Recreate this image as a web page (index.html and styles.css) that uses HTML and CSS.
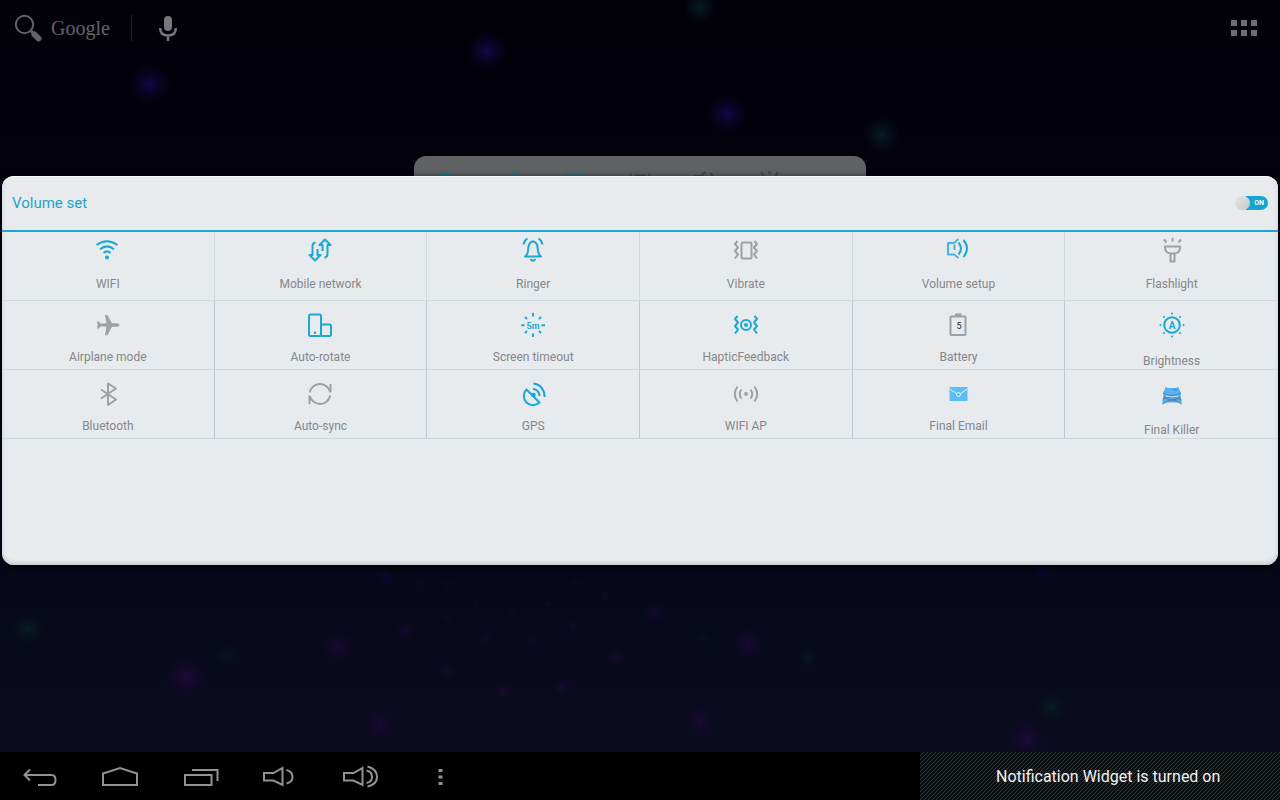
FILE: index.html
```html
<!DOCTYPE html>
<html lang="en">
<head>
<meta charset="utf-8">
<title>Notification Widget</title>
<link rel="stylesheet" href="styles.css">
</head>
<body>
<svg class="sprite" aria-hidden="true">
  <symbol id="wifi" viewBox="0 0 26 26"><path d="M1.5 8Q12 .5 22.5 8M5 12.2Q12 6.5 19 12.2M8.500 16Q12 12.700 15.500 16"/><circle class="solid" cx="12" cy="20.500" r="2"/></symbol>
  <symbol id="data" viewBox="0 0 26 26"><path d="M8.500 5.500Q5.500 6 5.500 9V18H2.500L8 23.500L13.500 18H10.500V12M17.500 20.500Q20.500 20 20.500 17V8H23.500L18 2.500L12.500 8H15.500V14"/></symbol>
  <symbol id="ringer" viewBox="0 0 26 26"><path d="M5 19.500Q8.200 17 8.200 12Q8.500 5 13 4.200Q17.500 5 17.800 12Q17.800 17 21 19.500ZM10.500 22Q13 25.500 15.500 22M3.500 7.500Q4 3.500 7.500 1.500M22.500 7.500Q22 3.500 18.500 1.500"/></symbol>
  <symbol id="zigzag" viewBox="0 0 26 26"><path d="M4.500 4L2 7L5 10.500L2 14L5 17.500L2 21.500M21.500 4L24 7L21 10.500L24 14L21 17.500L24 21.500"/></symbol>
  <symbol id="vibrate" viewBox="0 0 26 26"><use href="#zigzag"/><rect x="8.500" y="5.500" width="10" height="16" rx="1"/></symbol>
  <symbol id="volume" viewBox="0 0 26 26"><path class="light" d="M13.500 2L9 6H3V17.500H9L13.500 21M9.500 7.500V13"/><path d="M13.500 5.500Q18.500 11.700 13.500 17.500M18.500 3Q25.500 11.700 18.500 20"/></symbol>
  <symbol id="flashlight" viewBox="0 0 26 26"><path d="M6 9.500H21V11Q20.500 16 15.500 16.500H11.500Q6.500 16 6 11ZM11.500 16.500V24.500H15.500V16.500M13.500 1V4.500M5 2.500L7.500 5.500M22 2.500L19.500 5.500"/></symbol>
  <symbol id="plane" viewBox="0 0 26 26"><path class="solid" d="M24.700 13Q24.500 11.200 21 11.200H17L12.500 3H10L11.500 11.200L6 11.800L3.800 9.500H2L2.800 13L2 16.500H3.800L6 14.200L11.500 14.800L10 23.200H12.500L17 14.800H21Q24.500 14.800 24.700 13Z"/></symbol>
  <symbol id="rotate" viewBox="0 0 26 26"><rect x="2" y="2.500" width="12" height="21.500" rx="1.500"/><path d="M14 12.500H22.500Q24 12.500 24 14V22.500Q24 24 22.500 24H14"/><circle class="solid" cx="8" cy="20.700" r="1.200"/></symbol>
  <symbol id="haptic" viewBox="0 0 26 26"><use href="#zigzag"/><circle cx="13" cy="13" r="5"/><circle class="solid" cx="13" cy="13" r="2"/></symbol>
  <symbol id="bluetooth" viewBox="0 0 26 26"><path d="M6 8.500L21 18.500L13 24V2.500L21 7.500L6 17.500"/></symbol>
  <symbol id="sync" viewBox="0 0 26 26"><path d="M2.800 11.500A10.400 10.400 0 0 1 23 10.500M23.500 3V11.500M23.200 14.500A10.400 10.400 0 0 1 3 15.500M2.500 23V14.500"/></symbol>
  <symbol id="gps" viewBox="0 0 26 26"><path d="M6.500 8.500L19.500 21.500A9 9 0 1 1 6.500 8.500ZM13 8Q19 8.500 19.500 15M13.500 2.500Q24 4 24.700 16"/><circle class="solid" cx="13.500" cy="14" r="2.300"/></symbol>
  <symbol id="hotspot" viewBox="0 0 26 26"><path d="M8.500 8.500Q5 13 8.500 17.500M17.500 8.500Q21 13 17.500 17.500M4.500 5.500Q-1 13 4.500 20.500M21.500 5.500Q27 13 21.500 20.500"/><circle class="solid" cx="13" cy="13" r="1.900"/></symbol>
  <symbol id="email" viewBox="0 0 26 26"><path fill="#5cbdf3" stroke="none" d="M4.500 6H22.500V20H4.500Z"/><path class="crease" d="M4.500 8L11.500 12.500M22.500 8L15.500 12.500"/><circle class="crease" cx="13.500" cy="13.500" r="2"/></symbol>
  <symbol id="killer" viewBox="0 0 26 26"><path fill="#55b2f3" stroke="none" d="M6.500 6L9 7H17L19.500 6L20.500 9L22 12L21.500 15L22.500 18.500V23L18 21.500H8L3.500 23V18.500L4.500 15L4 12L5.500 9Z"/><path fill="none" stroke="#5c7a98" stroke-width="1" d="M4 12Q13 17 22 12M4 18Q13 14 22.500 19M3.500 23Q13 15 22.500 23M4.500 15.500Q13 22 21.500 16M14 8.500L18 9"/><path fill="none" stroke="#d7e9f5" stroke-width="1" d="M7 15Q13 17 19 15"/></symbol>
</svg>

<main class="desktop">
  <svg class="wallpaper" viewBox="0 0 1280 752" preserveAspectRatio="xMidYMid slice" aria-hidden="true">
    <defs>
      <radialGradient id="blue"><stop offset="0" stop-color="#10074a"/><stop offset=".4" stop-color="#0d0639" stop-opacity=".65"/><stop offset="1" stop-color="#0a0526" stop-opacity="0"/></radialGradient>
      <radialGradient id="violet"><stop offset="0" stop-color="#1c0a3c"/><stop offset=".4" stop-color="#180932" stop-opacity=".65"/><stop offset="1" stop-color="#120722" stop-opacity="0"/></radialGradient>
      <radialGradient id="teal"><stop offset="0" stop-color="#071c24"/><stop offset=".4" stop-color="#06171e" stop-opacity=".65"/><stop offset="1" stop-color="#051018" stop-opacity="0"/></radialGradient>
    </defs>
    <g fill="url(#blue)"><circle cx="150" cy="84" r="21"/><circle cx="487" cy="51" r="20"/><circle cx="727" cy="114" r="20"/><circle cx="1042" cy="569" r="15" opacity=".6"/><circle cx="385" cy="576" r="10" opacity=".5"/></g>
    <g fill="url(#teal)"><circle cx="700" cy="7" r="17"/><circle cx="882" cy="135" r="19"/><circle cx="28" cy="629" r="17"/><circle cx="227" cy="655" r="12" opacity=".6"/><circle cx="808" cy="658" r="11" opacity=".7"/><circle cx="1052" cy="707" r="17"/><circle cx="703" cy="638" r="7" opacity=".5"/></g>
    <g fill="url(#violet)"><circle cx="186" cy="677" r="20"/><circle cx="338" cy="646" r="17" opacity=".7"/><circle cx="380" cy="724" r="17" opacity=".7"/><circle cx="700" cy="721" r="16" opacity=".8"/><circle cx="748" cy="643" r="16" opacity=".8"/><circle cx="1027" cy="739" r="20"/><circle cx="654" cy="612" r="11" opacity=".6"/><circle cx="405" cy="631" r="10" opacity=".6"/><circle cx="447" cy="671" r="9" opacity=".5"/><circle cx="503" cy="691" r="9" opacity=".7"/><circle cx="562" cy="687" r="9" opacity=".8"/><circle cx="616" cy="658" r="9" opacity=".6"/><circle cx="486" cy="639" r="7" opacity=".5"/><circle cx="532" cy="640" r="7" opacity=".5"/><circle cx="573" cy="626" r="7" opacity=".5"/><circle cx="447" cy="618" r="6" opacity=".4"/><circle cx="512" cy="613" r="5" opacity=".4"/><circle cx="547" cy="604" r="5" opacity=".4"/><circle cx="476" cy="605" r="5" opacity=".4"/><circle cx="605" cy="595" r="6" opacity=".4"/><circle cx="576" cy="584" r="5" opacity=".4"/><circle cx="448" cy="584" r="5" opacity=".4"/><circle cx="421" cy="583" r="5" opacity=".4"/></g>
  </svg>

  <header class="search-bar">
    <button class="search" type="button">
      <svg width="32" height="32" viewBox="0 0 32 32" fill="none" stroke="#626267" aria-hidden="true"><circle cx="12.500" cy="12.500" r="8.700" stroke-width="2"/><path d="M19 19L22 22" stroke-width="3"/><path d="M22.500 22.500L26.500 26.500" stroke-width="6" stroke-linecap="round"/></svg>
      <span class="brand">Google</span>
    </button>
    <button class="voice" type="button" aria-label="Voice search">
      <svg width="20" height="28" viewBox="0 0 20 28" fill="none" stroke="#77777b" stroke-width="2.500" aria-hidden="true"><rect x="6" y="1" width="8" height="15" rx="4" fill="#77777b" stroke="none"/><path d="M2.200 13Q2.200 20.500 10 20.500Q17.800 20.500 17.800 13M10 20V26"/></svg>
    </button>
    <button class="apps" type="button" aria-label="All apps">
      <svg width="26" height="16" viewBox="0 0 26 16" fill="#6d6d71" aria-hidden="true"><path d="M0 0h6v6H0zM10 0h6v6h-6zM20 0h6v6h-6zM0 10h6v6H0zM10 10h6v6h-6zM20 10h6v6h-6z"/></svg>
    </button>
  </header>

  <div class="widget" aria-hidden="true">
    <svg class="icon on"><use href="#wifi"/></svg>
    <svg class="icon on"><use href="#data"/></svg>
    <svg class="icon on"><use href="#ringer"/></svg>
    <svg class="icon"><use href="#vibrate"/></svg>
    <svg class="icon"><use href="#volume"/></svg>
    <svg class="icon"><use href="#flashlight"/></svg>
  </div>

  <section class="panel" role="dialog" aria-labelledby="panel-title">
    <div class="panel-head">
      <h1 id="panel-title">Volume set</h1>
      <label class="switch"><input type="checkbox" checked aria-labelledby="panel-title"><span>ON</span></label>
    </div>
    <div class="tiles">
      <button class="tile first" type="button"><svg class="icon on"><use href="#wifi"/></svg>WIFI</button>
      <button class="tile first" type="button"><svg class="icon on"><use href="#data"/></svg>Mobile network</button>
      <button class="tile first" type="button"><svg class="icon on"><use href="#ringer"/></svg>Ringer</button>
      <button class="tile first" type="button"><svg class="icon"><use href="#vibrate"/></svg>Vibrate</button>
      <button class="tile first" type="button"><svg class="icon on"><use href="#volume"/></svg>Volume setup</button>
      <button class="tile first" type="button"><svg class="icon"><use href="#flashlight"/></svg>Flashlight</button>
      <button class="tile" type="button"><svg class="icon"><use href="#plane"/></svg>Airplane mode</button>
      <button class="tile" type="button"><svg class="icon on"><use href="#rotate"/></svg>Auto-rotate</button>
      <button class="tile" type="button"><svg class="icon on" viewBox="0 0 26 26"><path d="M1.200 13.200H4.500M21.500 13.200H25M13 1V4.500M13 21.500V25M5 5L7 7M21 5L19 7M5 21L7 19M21 21L19 19"/><text x="13" y="16.500" font-size="9">5m</text></svg>Screen timeout</button>
      <button class="tile" type="button"><svg class="icon on"><use href="#haptic"/></svg>HapticFeedback</button>
      <button class="tile" type="button"><svg class="icon" viewBox="0 0 26 26"><rect x="5.500" y="4.500" width="15" height="18.500" rx="1"/><path class="solid" d="M10 1.500H16.500V4H10Z"/><text class="dark" x="14" y="16.500" font-size="9">5</text></svg>Battery</button>
      <button class="tile roomy" type="button"><svg class="icon on" viewBox="0 0 26 26"><circle cx="13" cy="13" r="7.800"/><path class="dots" d="M13 1.500h0M13 24.500h0M1.500 13h0M24.500 13h0M5 5h0M21 5h0M5 21h0M21 21h0"/><text x="13" y="16.500" font-size="10">A</text></svg>Brightness</button>
      <button class="tile" type="button"><svg class="icon"><use href="#bluetooth"/></svg>Bluetooth</button>
      <button class="tile" type="button"><svg class="icon"><use href="#sync"/></svg>Auto-sync</button>
      <button class="tile" type="button"><svg class="icon on"><use href="#gps"/></svg>GPS</button>
      <button class="tile" type="button"><svg class="icon"><use href="#hotspot"/></svg>WIFI AP</button>
      <button class="tile" type="button"><svg class="icon"><use href="#email"/></svg>Final Email</button>
      <button class="tile roomy" type="button"><svg class="icon"><use href="#killer"/></svg>Final Killer</button>
    </div>
  </section>
</main>

<footer class="system-bar">
  <nav class="keys" aria-label="System">
    <button type="button" aria-label="Back"><svg viewBox="0 0 40 24"><path d="M10 4.500L4.500 10L10 15.500M4.500 10H31.500Q35.500 10 35.500 15Q35.500 20 31.500 20H18"/></svg></button>
    <button type="button" aria-label="Home"><svg viewBox="0 0 40 24"><path d="M3 20V8.500L20 3L37 8.500V20Z"/></svg></button>
    <button type="button" aria-label="Recent apps"><svg viewBox="0 0 40 24"><path d="M5 10H31.500V20H5ZM12 5H37.500V16"/></svg></button>
    <button type="button" aria-label="Volume down"><svg viewBox="0 0 40 24"><path d="M4 8H13.500L22.500 3V20L13.500 15.500H4ZM26.500 5Q32.500 6.500 32.500 12Q32.500 17 26.500 18.500"/></svg></button>
    <button type="button" aria-label="Volume up"><svg viewBox="0 0 40 24"><path d="M4 8H13.500L22.500 3V20L13.500 15.500H4ZM26.500 5.500Q32 6.500 32 12Q32 17 26.500 18M27.500 1.500Q37 4 37 12Q37 19.500 27.500 21.500"/></svg></button>
    <button type="button" aria-label="Menu"><svg viewBox="0 0 40 24"><path class="solid" d="M18.500 4h4v3h-4zM18.500 10.500h4v3h-4zM18.500 17h4v3h-4z"/></svg></button>
  </nav>
  <p class="ticker" role="status">Notification Widget is turned on</p>
</footer>
</body>
</html>
```

FILE: styles.css
```css
* {
  box-sizing: border-box;
}

body {
  display: flex;
  flex-direction: column;
  min-height: 100vh;
  margin: 0;
  background: #000;
  font-family: Roboto, "Noto Sans", sans-serif;
}

button {
  padding: 0;
  border: 0;
  background: none;
  color: inherit;
  font: inherit;
}

.sprite {
  position: absolute;
  width: 0;
  height: 0;
}

.desktop {
  position: relative;
  flex: 1;
  overflow: hidden;
  background: linear-gradient(#02010a, #03020e 30%, #07071a 72%, #0b0b20);
}

.wallpaper {
  position: absolute;
  inset: 0;
  width: 100%;
  height: 100%;
}

.search-bar {
  position: relative;
  display: flex;
  align-items: center;
  height: 56px;
  padding: 0 23px 0 12px;
}

.search {
  display: flex;
  align-items: center;
  gap: 7px;
  padding-right: 21px;
}

.brand {
  color: #626267;
  font: 20px/26px "Liberation Serif", serif;
}

.voice {
  height: 26px;
  padding-left: 26px;
  border-left: 1px solid #222228;
}

.voice svg,
.apps svg {
  display: block;
}

.apps {
  margin-left: auto;
}

.icon {
  flex: none;
  width: 26px;
  height: 26px;
  fill: none;
  stroke: currentColor;
  stroke-width: 2;
  stroke-linejoin: round;
  color: #9fa0a1;
}

.icon.on {
  color: #1ba8d2;
}

.solid {
  fill: currentColor;
  stroke: none;
}

.light {
  stroke: var(--speaker, #44b4ea);
}

.dots {
  stroke-linecap: round;
}

.crease {
  stroke: #e5f3fb;
  stroke-width: 1;
}

.icon text {
  fill: currentColor;
  stroke: none;
  font-family: Roboto, sans-serif;
  font-weight: 700;
  text-anchor: middle;
}

.icon .dark {
  fill: #222;
  font-weight: 400;
}

.widget {
  --speaker: #454648;
  position: relative;
  display: grid;
  grid-template-columns: repeat(7, 1fr);
  justify-items: center;
  width: 452px;
  height: 80px;
  margin: 100px auto 0;
  padding-top: 14px;
  border-radius: 12px;
  background: #606162;
}

.widget .icon {
  color: #454648;
}

.widget .icon.on {
  color: #17788f;
}

.panel {
  position: absolute;
  inset: 176px 2px auto;
  min-height: 389px;
  border-radius: 12px;
  background: #e7ebee;
  box-shadow: inset 0 1px 1px #fff, inset 0 -2px 4px #c3cacd, 0 3px 8px #000;
}

.panel-head {
  display: flex;
  align-items: center;
  justify-content: space-between;
  height: 56px;
  padding: 0 10px;
  border-bottom: 2px solid #1ba8cf;
}

.panel-head h1 {
  margin: 0;
  color: #24a3cb;
  font-size: 15px;
  font-weight: 400;
  line-height: 20px;
}

.switch {
  position: relative;
  display: flex;
}

.switch input {
  appearance: none;
  width: 33px;
  height: 14px;
  margin: 0;
  border-radius: 7px;
  background: linear-gradient(90deg, transparent 11px, #16a5cf 11px);
}

.switch input::before {
  content: "";
  display: block;
  width: 15px;
  height: 14px;
  border-radius: 7px;
  background: linear-gradient(135deg, #e6e6e6, #c8c8c8);
}

.switch span {
  position: absolute;
  right: 4px;
  color: #fff;
  font-size: 7px;
  font-weight: 700;
  line-height: 14px;
}

.tiles {
  display: grid;
  grid-template-columns: repeat(6, 1fr);
}

.tile {
  display: flex;
  flex-direction: column;
  align-items: center;
  gap: 11px;
  height: 69px;
  padding-top: 11px;
  border-right: 1px solid #c2c9ce;
  border-bottom: 1px solid #d3d8db;
  color: #85878a;
  font-size: 12px;
  line-height: 16px;
}

.tile:nth-child(6n) {
  border-right: 0;
}

.first {
  gap: 13px;
  padding-top: 5px;
  border-right-color: #d3d8db;
}

.roomy {
  gap: 15px;
}

.system-bar {
  display: flex;
  justify-content: space-between;
  height: 48px;
}

.keys {
  display: flex;
}

.keys button {
  display: grid;
  place-items: center;
  width: 80px;
  padding-top: 2px;
}

.keys svg {
  width: 40px;
  height: 24px;
  fill: none;
  stroke: #929292;
  stroke-width: 2;
  color: #929292;
}

.keys svg .solid {
  fill: currentColor;
  stroke: none;
}

.ticker {
  width: 360px;
  margin: 0;
  padding: 1px 0 0 76px;
  background: linear-gradient(135deg, #0a0f11 44%, #2b373a 44% 56%, #0a0f11 56%) 0 0 / 4px 4px;
  color: #f2f2f2;
  font-size: 16px;
  line-height: 47px;
}
```
